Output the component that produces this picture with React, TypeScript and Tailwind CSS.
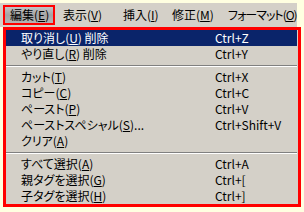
import React from "react";

const font = "[font-family:'Noto_Sans_CJK_JP','Noto_Sans',sans-serif] [font-feature-settings:'palt']";

function Mn({ label, k, after = "" }: { label: string; k: string; after?: string }) {
  return (
    <span className="whitespace-nowrap">
      {label}(<span className="underline underline-offset-1">{k}</span>){after}
    </span>
  );
}

type Item = { label: string; k: string; after?: string; sc: string; active?: boolean };

const groups: Item[][] = [
  [
    { label: "取り消し", k: "U", after: " 削除", sc: "Ctrl+Z", active: true },
    { label: "やり直し", k: "R", after: " 削除", sc: "Ctrl+Y" },
  ],
  [
    { label: "カット", k: "T", sc: "Ctrl+X" },
    { label: "コピー", k: "C", sc: "Ctrl+C" },
    { label: "ペースト", k: "P", sc: "Ctrl+V" },
    { label: "ペーストスペシャル", k: "S", after: "...", sc: "Ctrl+Shift+V" },
    { label: "クリア", k: "A", sc: "" },
  ],
  [
    { label: "すべて選択", k: "A", sc: "Ctrl+A" },
    { label: "親タグを選択", k: "G", sc: "Ctrl+[" },
    { label: "子タグを選択", k: "H", sc: "Ctrl+]" },
  ],
];

export default function App() {
  return (
    <div className={`w-[304px] h-[212px] bg-[#ffffe1] pt-[3px] text-[12px] leading-none text-black ${font}`}>
      {/* menu bar */}
      <div className="flex h-[24px] w-[297px] items-center bg-[#d4d0c8]">
        <div className="ml-[3px] flex h-[20px] w-[52px] items-center border-2 border-[#ff0000] bg-gradient-to-b from-[#c4c4c4] via-[#a4a4a4] to-[#b4b4b4] pl-[5px]">
          <Mn label="編集" k="E" />
        </div>
        <div className="w-[60px] pl-[8px]">
          <Mn label="表示" k="V" />
        </div>
        <div className="w-[52px] pl-[8px]">
          <Mn label="挿入" k="I" />
        </div>
        <div className="w-[55px] pl-[5px]">
          <Mn label="修正" k="M" />
        </div>
        <div className="min-w-0 flex-1 pl-[6px] tracking-[-1px]">
          <Mn label="フォーマット" k="O" />
        </div>
      </div>

      {/* dropdown */}
      <div className="ml-[3px] w-[298px] border-[3px] border-[#ff0000] bg-[#d4d0c8] pr-[1px]">
        {groups.map((g, gi) => (
          <div key={gi}>
            {gi > 0 && (
              <div className="flex h-[7px] items-center">
                <div className="w-full border-t border-b border-t-[#808080] border-b-white" />
              </div>
            )}
            {g.map((it, i) => (
              <div
                key={i}
                className={`flex h-[16px] items-center ${it.active ? "bg-[#0a246a] text-white" : ""}`}
              >
                <div className="w-[209px] pl-[15px]">
                  <Mn label={it.label} k={it.k} after={it.after} />
                </div>
                <div className="whitespace-nowrap">{it.sc}</div>
              </div>
            ))}
          </div>
        ))}
      </div>
    </div>
  );
}
